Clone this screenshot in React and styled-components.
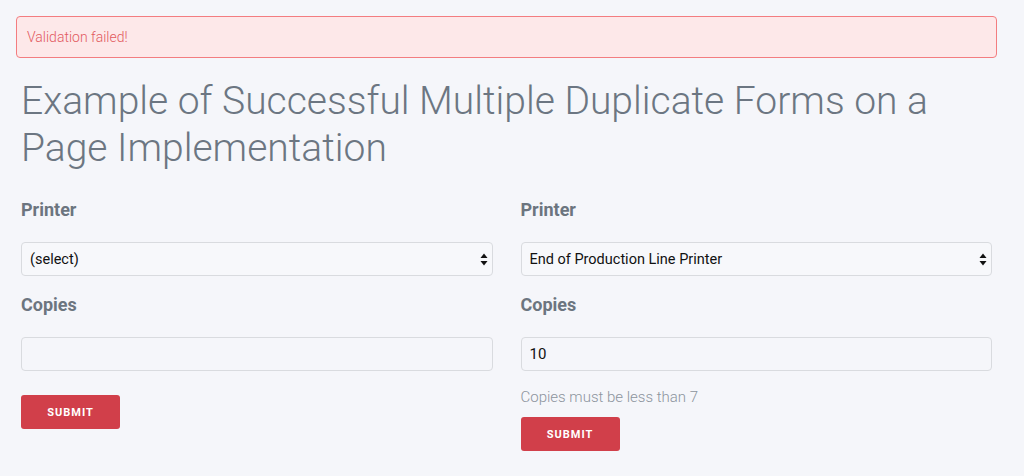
import styled, { createGlobalStyle } from "styled-components";

const GlobalStyle = createGlobalStyle`
  html, body {
    margin: 0;
    padding: 0;
    background: #f5f6fa;
    font-family: Roboto, "Liberation Sans", sans-serif;
  }
`;

const forms = [
  { id: 1, printer: "(select)", copies: "", error: null },
  {
    id: 2,
    printer: "End of Production Line Printer",
    copies: "10",
    error: "Copies must be less than 7",
  },
];

const SelectArrows = () => (
  <svg width="8" height="13" viewBox="0 0 8 13">
    <path d="M4 0.5 L7.5 5 L0.5 5 Z" fill="#111" />
    <path d="M4 12.5 L7.5 8 L0.5 8 Z" fill="#111" />
  </svg>
);

const PrintForm = ({ form }) => (
  <Form onSubmit={(e) => e.preventDefault()}>
    <FieldGroup>
      <Label>Printer</Label>
      <SelectBox>
        <span>{form.printer}</span>
        <SelectArrows />
      </SelectBox>
    </FieldGroup>
    <FieldGroup>
      <Label>Copies</Label>
      <Input defaultValue={form.copies} />
    </FieldGroup>
    {form.error && <Helper>{form.error}</Helper>}
    <Button type="submit">SUBMIT</Button>
  </Form>
);

export default function App() {
  return (
    <>
      <GlobalStyle />
      <Page>
        <Alert>Validation failed!</Alert>
        <Heading>
          Example of Successful Multiple Duplicate Forms on a Page
          Implementation
        </Heading>
        <Columns>
          {forms.map((form) => (
            <PrintForm key={form.id} form={form} />
          ))}
        </Columns>
      </Page>
    </>
  );
}

const Page = styled.div`
  width: 981px;
  padding: 16px 0 0 16px;
`;

const Alert = styled.div`
  box-sizing: border-box;
  height: 42px;
  display: flex;
  align-items: center;
  padding: 0 10px;
  background: #fde8e9;
  border: 1px solid #f37d80;
  border-radius: 4px;
  color: #e25a5f;
  font-size: 14px;
  font-weight: 300;
`;

const Heading = styled.h1`
  margin: 20px 0 24px 5px;
  font-size: 39px;
  font-weight: 300;
  line-height: 47px;
  color: #6c7682;
  max-width: 940px;
`;

const Columns = styled.div`
  display: grid;
  grid-template-columns: 1fr 1fr;
  column-gap: 28px;
  padding: 0 5px;
`;

const Form = styled.form`
  display: flex;
  flex-direction: column;
  align-items: flex-start;
`;

const FieldGroup = styled.div`
  align-self: stretch;
  margin-bottom: 15px;
`;

const Label = styled.label`
  display: block;
  margin-bottom: 19px;
  font-size: 18px;
  font-weight: 700;
  line-height: 27px;
  color: #6c757f;
`;

const SelectBox = styled.div`
  box-sizing: border-box;
  height: 34px;
  display: flex;
  align-items: center;
  justify-content: space-between;
  padding: 0 4px 0 8px;
  border: 1px solid #d9dbdf;
  border-radius: 4px;
  background: #f7f8fb;
  font-size: 14.5px;
  color: #111;
`;

const Input = styled.input`
  box-sizing: border-box;
  width: 100%;
  height: 34px;
  padding: 0 8px;
  border: 1px solid #d9dbdf;
  border-radius: 4px;
  background: #f5f6fa;
  font-family: inherit;
  font-size: 15px;
  color: #111;
  outline: none;
`;

const Helper = styled.div`
  font-size: 15px;
  font-weight: 300;
  line-height: 22px;
  color: #8c949d;
`;

const Button = styled.button`
  margin-top: 9px;
  width: 99px;
  height: 34px;
  border: none;
  border-radius: 3px;
  background: #d13f4a;
  color: #fff;
  font-family: inherit;
  font-size: 11px;
  font-weight: 700;
  letter-spacing: 1px;
  cursor: pointer;
`;
